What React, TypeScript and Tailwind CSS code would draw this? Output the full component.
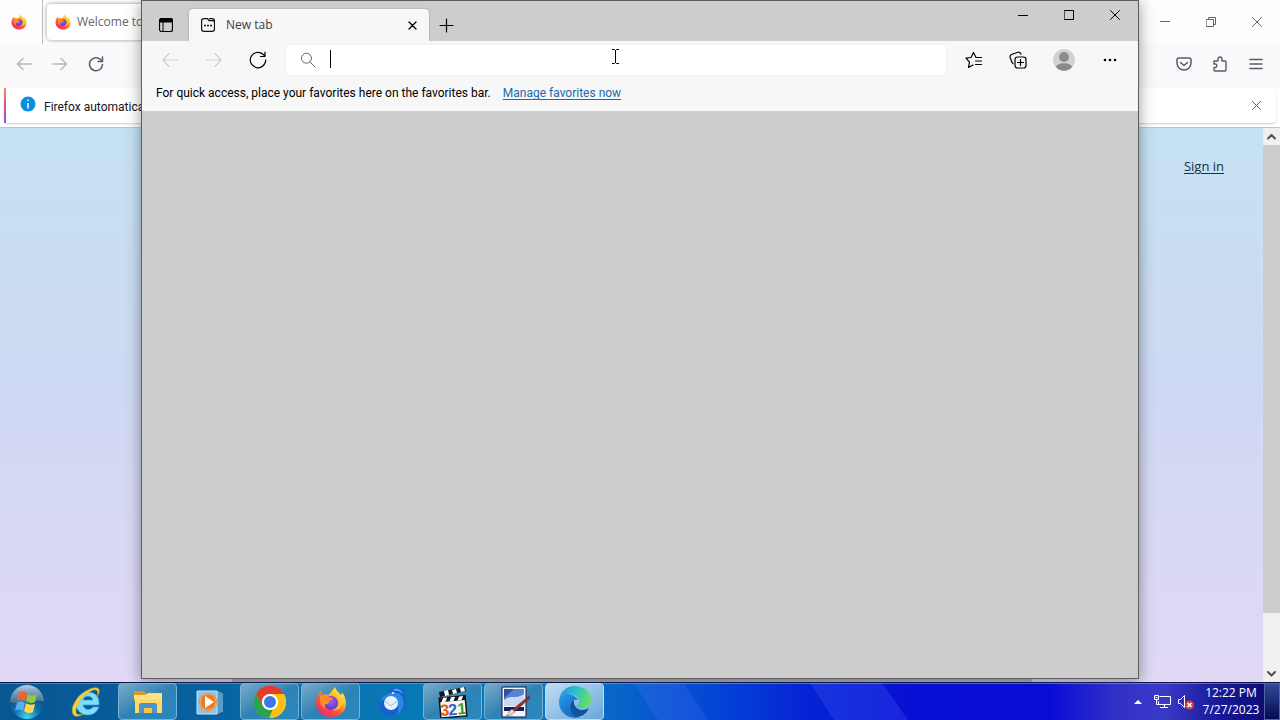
import type { ReactNode } from 'react';

interface IconButtonProps {
  label: string;
  className?: string;
  children: ReactNode;
}

function IconButton({ label, className = '', children }: IconButtonProps) {
  return (
    <button aria-label={label} className={`flex shrink-0 items-center justify-center ${className}`}>
      {children}
    </button>
  );
}

interface LineIconProps {
  d: string;
  size?: number;
  width?: number;
  className?: string;
}

function LineIcon({ d, size = 16, width = 1, className = '' }: LineIconProps) {
  return (
    <svg width={size} height={size} viewBox={`0 0 ${size} ${size}`} fill="none" stroke="currentColor" strokeWidth={width} strokeLinecap="round" strokeLinejoin="round" className={className}>
      <path d={d} />
    </svg>
  );
}

function FirefoxLogo({ size, id }: { size: number; id: string }) {
  return (
    <svg width={size} height={size} viewBox="0 0 32 32">
      <defs>
        <linearGradient id={`${id}-body`} x1="0.85" y1="0.1" x2="0.2" y2="0.95">
          <stop offset="0" stopColor="#fff44f" />
          <stop offset="0.3" stopColor="#ffb52e" />
          <stop offset="0.6" stopColor="#ff5a36" />
          <stop offset="1" stopColor="#f0246f" />
        </linearGradient>
        <radialGradient id={`${id}-globe`} cx="0.5" cy="0.4" r="0.6">
          <stop offset="0" stopColor="#a05cf5" />
          <stop offset="1" stopColor="#5b3cc4" />
        </radialGradient>
      </defs>
      <path d="M20 1c1 4 4 5 6 8 1-1 1-2 1-3 3 4 4 8 4 12 0 8-7 13-15 13S1 25 1 17C1 12 3 8 6 5c0 2 0 3 1 4 2-1 4-1 6 0 2-2 4-4 7-8z" fill={`url(#${id}-body)`} />
      <circle cx="16" cy="17" r="7" fill={`url(#${id}-globe)`} />
      <path d="M5 10c4-2 7-1 9 1l4 1c0 2-3 2-4 3s1 3-2 3-3 3 0 5c-5-1-7-5-7-9z" fill="#ff8a2a" />
      <path d="M19 3c0 5 6 7 5 14-1 4-3 6-7 7 6 1 11-3 11-9 0-5-5-7-9-12z" fill="#ffcf3a" opacity="0.75" />
    </svg>
  );
}

function WindowsOrb() {
  return (
    <svg width="36" height="36" viewBox="0 0 36 36">
      <defs>
        <radialGradient id="orb" cx="0.5" cy="0.95" r="0.8">
          <stop offset="0" stopColor="#3fd8f8" />
          <stop offset="0.45" stopColor="#0e74b3" />
          <stop offset="1" stopColor="#0d3f69" />
        </radialGradient>
        <linearGradient id="orb-shine" x1="0" y1="0" x2="0" y2="1">
          <stop offset="0" stopColor="#b5cfe0" />
          <stop offset="1" stopColor="#4f7c9f" stopOpacity="0.7" />
        </linearGradient>
      </defs>
      <circle cx="18" cy="18" r="17" fill="url(#orb)" />
      <path d="M1 18a17 17 0 0 1 34 0c-8-4-24 4-34 0z" fill="url(#orb-shine)" />
      <path d="M10 9c3-2 5-2 8 0l-2 8c-3-2-5-2-8 0z" fill="#f0642c" />
      <path d="M19 10c3 2 5 2 9 0l-2 8c-3 2-6 1-9-1z" fill="#96c83c" />
      <path d="M8 19c3-2 5-2 8 0l-2 8c-3-2-5-2-8 0z" fill="#5ab0ee" />
      <path d="M17 19c3 2 5 2 9 1l-2 8c-4 2-6 1-9-1z" fill="#ffd84a" />
    </svg>
  );
}

function ExplorerEIcon() {
  return (
    <svg width="32" height="32" viewBox="0 0 32 32">
      <path d="M28 19H12c1 5 7 6 10 2h6c-2 5-6 8-11 8C10 29 5 24 5 18S10 6 17 6s12 5 11 13zM12 14h10c-1-5-9-5-10 0z" fill="#7fdcfa" stroke="#35a7dd" strokeWidth="0.7" />
      <path d="M26 11C32 1 25-1 15 5 5 11-1 22 2 28c2 4 7 2 10 0-4 1-7 1-7-2C4 20 12 9 20 5c6-3 8 0 6 6z" fill="#f8cf38" stroke="#d5a516" strokeWidth="0.5" />
    </svg>
  );
}

function FolderIcon() {
  return (
    <svg width="32" height="32" viewBox="0 0 32 32">
      <path d="M2 5h10l2 3h15v7H2z" fill="#d99b1f" />
      <path d="M3 9h10l3-2h14v20H3z" fill="#ffd967" />
      <path d="M2 9h11l3-1h14v5H2z" fill="#ffe083" />
      <path d="M7 27v-8q0-2 2-2h14q2 0 2 2v8h-5v-5h-8v5z" fill="#4b93cd" />
      <path d="M12 22h8v5h-8z" fill="#f6c54b" />
    </svg>
  );
}

function MediaPlayerIcon() {
  return (
    <svg width="30" height="28" viewBox="0 0 30 28">
      <path d="M3 3h20v23H3z" fill="#8fc6e8" stroke="#c8e4f5" />
      <path d="M24 3v23M26 4v21M28 5v19" stroke="#a9d6ef" />
      <circle cx="14" cy="14" r="9" fill="#ea7a24" />
      <circle cx="14" cy="14" r="8" fill="none" stroke="#f9b26d" />
      <path d="M11 8l9 6-9 6z" fill="#fff" />
    </svg>
  );
}

function ChromeIcon() {
  return (
    <svg width="32" height="32" viewBox="0 0 32 32">
      <circle cx="16" cy="16" r="16" fill="#fbc116" />
      <path d="M2 8a16 16 0 0 1 28 0H16a8 8 0 0 0-7 12z" fill="#e33b2e" />
      <path d="M2 8l7 12a8 8 0 0 0 10 3l-4 9A16 16 0 0 1 2 8z" fill="#2ba24c" />
      <path d="M30 8a16 16 0 0 1-14 24l7-12a8 8 0 0 0-7-12z" fill="#fbc116" />
      <circle cx="16" cy="16" r="8" fill="#fff" />
      <circle cx="16" cy="16" r="6" fill="#3b78e7" />
    </svg>
  );
}

function ThunderbirdIcon() {
  return (
    <svg width="32" height="32" viewBox="0 0 32 32">
      <path d="M10 9C12 3 18 0 24 2c4 2 6 5 6 9 1 10-5 19-15 19C7 30 1 24 3 15c0 2 1 2 2 1 0-3 2-6 5-7z" fill="#1463cc" />
      <path d="M10 9c5-5 15-3 17 3 2 7-1 13-6 17 2-6 2-14-5-17-4-1-8 0-11 4 0-3 2-6 5-7z" fill="#2b86e4" />
      <path d="M18 3c4-1 8 1 9 5-3-3-6-4-10-3z" fill="#4ba6f5" />
      <circle cx="15" cy="17" r="7" fill="#e8f4ff" />
      <path d="M9 15l6 5 6-5" fill="none" stroke="#a9c9ea" strokeWidth="1.2" />
      <circle cx="17" cy="7" r="1" fill="#fff" />
    </svg>
  );
}

function ClapperIcon() {
  return (
    <svg width="32" height="32" viewBox="0 0 32 32">
      <g transform="rotate(-5 16 21)">
        <rect x="3" y="11" width="26" height="20" fill="#f8f8f4" stroke="#161616" strokeWidth="1.5" />
        <path d="M3 11h26v4H3z" fill="#161616" />
        <path d="M7 11h4l-2 4H5zM15 11h4l-2 4h-4zM23 11h4l-2 4h-4z" fill="#fff" />
        <g fontFamily="Liberation Sans" fontSize="16" fontWeight="700">
          <text x="3" y="29" fill="#e2571e">3</text>
          <text x="11" y="29" fill="#3860c8">2</text>
          <text x="20" y="29" fill="#3c9c32">1</text>
        </g>
      </g>
      <path d="M2 6l26-5 1 4-26 6z" fill="#161616" />
      <path d="M7 5l4-1 1 5-4 1zM15 4l4-1 1 4-4 1zM23 2l4-1 1 4-4 1z" fill="#fff" />
    </svg>
  );
}

function JournalIcon() {
  return (
    <svg width="32" height="32" viewBox="0 0 32 32">
      <path d="M4 1h24v30H4z" fill="#f4f6fb" stroke="#101735" />
      <path d="M6 3h20v16H6z" fill="#5c82cf" />
      <path d="M6 3h10L6 12z" fill="#2c4fa8" />
      <path d="M6 14c7-6 11 0 20-6v12H6z" fill="#c6d8f3" />
      <path d="M6 21h20v4H6z" fill="#10225f" />
      <path d="M31 10L14 24l2 2 16-14z" fill="#9c3036" stroke="#5c1c25" strokeWidth="0.6" />
      <path d="M14 23l3 3-4 3-5 1c3-1 2-5 6-7z" fill="#e8d9ca" stroke="#66515a" strokeWidth="0.5" />
    </svg>
  );
}

function EdgeIcon() {
  return (
    <svg width="32" height="32" viewBox="0 0 32 32">
      <defs>
        <linearGradient id="edge-top" x1="0" y1="0.3" x2="1" y2="0.5">
          <stop offset="0" stopColor="#2793dc" />
          <stop offset="0.5" stopColor="#2fc0cf" />
          <stop offset="1" stopColor="#68df5b" />
        </linearGradient>
        <linearGradient id="edge-side" x1="0" y1="0" x2="0.8" y2="1">
          <stop offset="0" stopColor="#249ce6" />
          <stop offset="1" stopColor="#1463bd" />
        </linearGradient>
      </defs>
      <path d="M0 15C1 6 7 0 16 0c10 0 16 7 16 14 0 6-5 8-9 8-3 0-6-1-5-3 1-1 2-2 2-4 0-4-5-7-10-7-5 0-9 4-10 7z" fill="url(#edge-top)" />
      <path d="M0 16c0-5 5-8 9-8s9 3 10 6c-4-1-8 2-8 6 0 5 4 10 10 11-12 3-21-5-21-15z" fill="url(#edge-side)" />
      <path d="M11 20c0-3 2-5 4-6-1 7 5 12 13 9 1-1 2 0 1 1-3 5-8 7-11 7-4-1-7-6-7-11z" fill="#14519f" />
    </svg>
  );
}

function FirefoxWindow() {
  return (
    <section aria-label="Firefox" className="flex h-full flex-col bg-white">
      <div className="flex h-11 items-center bg-[#fdfdfe]">
        <div className="flex h-11 w-[43px] shrink-0 items-center justify-center border-r border-[#bcbcc2] pr-1">
          <FirefoxLogo size={16} id="pinned" />
        </div>
        <button className="ml-1 flex h-9 w-[225px] items-center gap-1.5 rounded bg-white px-2 text-xs text-[#66666c] shadow-[0_0_4px_rgba(0,0,0,0.4)]">
          <FirefoxLogo size={16} id="welcome" />
          <span className="whitespace-nowrap">Welcome to</span>
        </button>
        <div className="ml-auto flex h-11 text-[#66666a]">
          <IconButton label="Minimize Firefox" className="w-[46px]"><LineIcon size={10} d="M0 4.5h10" /></IconButton>
          <IconButton label="Restore Firefox" className="w-[46px]"><LineIcon size={10} d="M.5 2.5h7v7h-7zM2.5 2.5v-2h7v7h-2" /></IconButton>
          <IconButton label="Close Firefox" className="w-[46px]"><LineIcon size={10} d="M.5.5l9 9M9.5.5l-9 9" /></IconButton>
        </div>
      </div>
      <div className="flex h-11 items-center bg-[#f9f9fb] px-1.5 pb-1 text-[#5b5b62]">
        <IconButton label="Firefox back" className="w-9 text-[#b5b5b9]"><LineIcon width={1.4} d="M15 8H1.5M7 2.5L1.5 8 7 13.5" /></IconButton>
        <IconButton label="Firefox forward" className="w-9 text-[#b5b5b9]"><LineIcon width={1.4} d="M1 8h13.5M9 2.5L14.5 8 9 13.5" /></IconButton>
        <IconButton label="Firefox reload" className="w-9"><LineIcon width={1.5} d="M14.5 8.5a6.5 6.5 0 1 1-2-5L14.5 5.5M14.5 1v4.5H10" /></IconButton>
        <IconButton label="Save to Pocket" className="ml-auto w-9"><LineIcon width={1.5} d="M3 2h10q2 0 2 2v3a7 7 0 0 1-14 0V4q0-2 2-2zM4.5 6.5L8 9.5l3.5-3" /></IconButton>
        <IconButton label="Extensions" className="w-9"><LineIcon width={1.4} d="M2 5h4V3a2 2 0 0 1 4 0v2h3q1 0 1 1v8q0 1-1 1H3q-1 0-1-1v-2.5h1.5a1.8 1.8 0 0 0 0-3.5H2z" /></IconButton>
        <IconButton label="Firefox menu" className="w-9"><LineIcon width={1.4} d="M2 3.5h12M2 8h12M2 12.5h12" /></IconButton>
      </div>
      <div className="mx-1 flex h-[35px] items-center rounded bg-white pr-3 text-xs text-[#15141a] shadow-[0_1px_2px_rgba(0,0,0,0.2)]">
        <div className="h-full w-0.5 bg-linear-to-b from-[#f08a55] via-[#d9509b] to-[#8855cf]" />
        <svg width="16" height="16" viewBox="0 0 16 16" className="mr-2 mb-1 ml-[14px] shrink-0">
          <circle cx="8" cy="8" r="7.5" fill="#0a8de0" />
          <path d="M8 3.5v1.5M8 7v5.5" stroke="#fff" strokeWidth="1.5" />
        </svg>
        <span className="pt-0.5 font-['Roboto','Open_Sans',sans-serif] whitespace-nowrap">Firefox automatically</span>
        <IconButton label="Dismiss notification" className="ml-auto h-6 w-4 text-[#5b5b62]"><LineIcon size={9} d="M.5.5l8 8M8.5.5l-8 8" /></IconButton>
      </div>
      <div className="mt-1 flex min-h-0 flex-1 border-t border-[#b9c8d1]">
        <main className="flex flex-1 flex-col items-end justify-between bg-linear-to-b from-[#c5e2f2] via-[#ced9f3] via-45% to-[#e1d8f5]">
          <a href="#signin" className="mt-[29px] mr-[39px] text-[13px] text-[#152f4c] underline underline-offset-2">Sign in</a>
          <div className="h-1 w-[800px] self-center bg-[#b5b3c2]" />
        </main>
        <div className="flex w-[17px] flex-col bg-[#f0f0f0] text-[#505050]">
          <IconButton label="Scroll up" className="h-[17px]"><LineIcon size={9} width={2} d="M1 6.5L4.5 3 8 6.5" /></IconButton>
          <div className="flex-9 bg-[#cdcdcd]" />
          <div className="flex-1" />
          <IconButton label="Scroll down" className="h-[17px]"><LineIcon size={9} width={2} d="M1 3l3.5 3.5L8 3" /></IconButton>
        </div>
      </div>
    </section>
  );
}

function EdgeWindow() {
  return (
    <section aria-label="Microsoft Edge" className="absolute top-0 right-[141px] bottom-[3px] left-[141px] flex flex-col border border-[#5c5c5c] bg-[#cdcdcd] text-black shadow-[0_2px_14px_rgba(0,0,0,0.4)]">
      <div className="flex h-10 items-end">
        <IconButton label="Tab actions" className="mb-0.5 h-7 w-[47px]">
          <svg width="14" height="14" viewBox="0 0 14 14" fill="none" stroke="currentColor">
            <rect x="0.5" y="0.5" width="13" height="13" rx="2" strokeWidth="1.2" />
            <path d="M1 1h12v3H1z" fill="currentColor" />
            <path d="M4 4v9" />
          </svg>
        </IconButton>
        <div className="flex h-8 w-60 items-center rounded-t bg-[#f7f7f7] px-3 text-xs shadow-[0_0_2px_rgba(0,0,0,0.3)]">
          <svg width="14" height="14" viewBox="0 0 14 14" fill="none" stroke="#111" strokeWidth="1.2">
            <path d="M3 .6h3.5l1.5 2h3.5q2 0 2 2V11q0 2.4-2.4 2.4H3Q.6 13.4.6 11V3Q.6.6 3 .6zM8 .6h3q2.4 0 2.4 2.4v2" />
            <path d="M3 7.5h2M6 7.5h2M9 7.5h2" strokeWidth="1.5" />
          </svg>
          <span className="ml-[11px] text-[#3c3c3c]">New tab</span>
          <IconButton label="Close tab" className="ml-auto h-5 w-2.5"><LineIcon size={9} width={1.3} d="M1 1l7 7M8 1L1 8" /></IconButton>
        </div>
        <IconButton label="New tab" className="mb-0.5 h-7 w-[35px]"><LineIcon size={15} width={1.2} d="M7.5 1v13M1 7.5h13" /></IconButton>
        <div className="ml-auto flex self-start">
          <IconButton label="Minimize" className="h-7 w-[46px]"><LineIcon size={10} d="M0 5.5h10" /></IconButton>
          <IconButton label="Maximize" className="h-7 w-[46px]"><LineIcon size={10} d="M.5.5h9v9h-9z" /></IconButton>
          <IconButton label="Close" className="h-7 w-[46px]"><LineIcon size={10} d="M.5.5l9 9M9.5.5l-9 9" /></IconButton>
        </div>
      </div>
      <div className="flex h-[38px] items-center bg-[#f7f7f7] px-1.5">
        <IconButton label="Back" className="h-8 w-11 text-[#cfcfcf]"><LineIcon width={1.2} d="M15.5 8H.8M7 1.5L.8 8 7 14.5" /></IconButton>
        <IconButton label="Forward" className="h-8 w-11 text-[#cfcfcf]"><LineIcon width={1.2} d="M.5 8h14.7M9 1.5L15.2 8 9 14.5" /></IconButton>
        <IconButton label="Reload" className="h-8 w-11"><LineIcon size={18} width={1.2} d="M16.7 9A7.7 7.7 0 1 1 14 3.2L16 5M16 1v4.5h-4.5" /></IconButton>
        <label className="mx-1.5 flex h-[30px] min-w-0 flex-1 items-center rounded-xs bg-white pl-[14px] shadow-[0_0_2px_rgba(0,0,0,0.08)]">
          <LineIcon d="M11.5 6.2A5 5 0 1 1 1.5 6.2a5 5 0 0 1 10 0zM10 10l5 5" className="text-[#666]" />
          <span className="mb-0.5 ml-[14px] h-[18px] w-px bg-black" />
          <input aria-label="Search or enter web address" className="min-w-0 flex-1 text-sm outline-none" />
        </label>
        <IconButton label="Favorites" className="h-8 w-11"><LineIcon size={18} width={1.2} d="M16.5 6.5H11L8.5 1.5 6 6.5l-5 .6 3.5 4L3.5 16.5 8 14M10.5 10h6M10.5 13.5h6" /></IconButton>
        <IconButton label="Collections" className="h-8 w-11">
          <svg width="18" height="18" viewBox="0 0 18 18" fill="none" stroke="currentColor" strokeWidth="1.2" strokeLinecap="round">
            <path d="M4 12.5L3 11.5 1.2 6.5Q.5 4 3 3.2L9 1.2Q11 .5 12 3.2" />
            <rect x="6" y="6" width="11" height="11" rx="2.5" />
            <path d="M11.5 8.5v6M8.5 11.5h6" />
          </svg>
        </IconButton>
        <IconButton label="Profile" className="h-8 w-12">
          <svg width="22" height="22" viewBox="0 0 22 22">
            <circle cx="11" cy="11" r="11" fill="#d3d2d0" />
            <circle cx="11" cy="8" r="5" fill="#8d8b89" />
            <path d="M3 18c1-5 15-5 16 0-4 5-12 5-16 0z" fill="#8d8b89" />
          </svg>
        </IconButton>
        <IconButton label="Settings and more" className="h-8 w-11">
          <svg width="14" height="4" viewBox="0 0 14 4"><circle cx="2" cy="2" r="1.3" /><circle cx="7" cy="2" r="1.3" /><circle cx="12" cy="2" r="1.3" /></svg>
        </IconButton>
      </div>
      <div className="flex h-8 items-center gap-3 bg-[#f7f7f7] px-[14px] pb-1 font-['Roboto','Open_Sans',sans-serif] text-xs">
        <span>For quick access, place your favorites here on the favorites bar.</span>
        <a href="#favorites" className="text-[#2269ad] underline underline-offset-2">Manage favorites now</a>
      </div>
      <svg width="9" height="17" viewBox="0 0 9 17" className="absolute top-[47px] left-[469px]" fill="none" stroke="#000">
        <path d="M1 1.5h2.5l1 1 1-1H8M1 15.5h2.5l1-1 1 1H8M4.5 2v13" />
      </svg>
    </section>
  );
}

const TASKS = [
  { name: 'Internet Explorer', icon: <ExplorerEIcon />, open: false },
  { name: 'File Explorer', icon: <FolderIcon />, open: true },
  { name: 'Media Player', icon: <MediaPlayerIcon />, open: false },
  { name: 'Chrome', icon: <ChromeIcon />, open: true },
  { name: 'Firefox', icon: <FirefoxLogo size={32} id="task" />, open: true },
  { name: 'Thunderbird', icon: <ThunderbirdIcon />, open: false },
  { name: 'Media Player Classic', icon: <ClapperIcon />, open: true },
  { name: 'Journal', icon: <JournalIcon />, open: true },
  { name: 'Edge', icon: <EdgeIcon />, open: true, active: true },
];

function taskStyle(open: boolean, active?: boolean) {
  if (active) return 'border-[#b9dcf4] bg-linear-to-br from-[#c1dcf2] to-[#66a8d9]';
  if (open) return 'border-[#76b4d5] bg-linear-to-br from-[#78abc8] via-[#2f83b4] to-[#2987bd]';
  return 'border-transparent';
}

function Taskbar() {
  return (
    <footer className="relative flex h-[38px] shrink-0 items-center border-t border-[#07194c] text-white">
      <svg className="absolute inset-0 h-full w-full" viewBox="0 0 1280 37" preserveAspectRatio="none">
        <defs>
          <linearGradient id="bar-glow">
            <stop offset="0" stopColor="#075791" />
            <stop offset="0.15" stopColor="#07609f" />
            <stop offset="0.3" stopColor="#0878b4" />
            <stop offset="0.42" stopColor="#0878bc" />
            <stop offset="0.48" stopColor="#0866c8" />
            <stop offset="0.56" stopColor="#0444d6" />
            <stop offset="0.63" stopColor="#0524d4" />
            <stop offset="0.71" stopColor="#070fd4" />
            <stop offset="0.82" stopColor="#0a0bd5" />
            <stop offset="0.87" stopColor="#3030c9" />
            <stop offset="0.91" stopColor="#3a3ac8" />
            <stop offset="0.95" stopColor="#1a1a9a" />
            <stop offset="1" stopColor="#08086c" />
          </linearGradient>
        </defs>
        <path d="M0 0h1280v37H0z" fill="url(#bar-glow)" />
        <path d="M634 0h50l24 37h-50zM810 0h72l26 37h-74z" fill="#5a70ff" opacity="0.22" />
        <path d="M0 .5h1280" stroke="#8eb8e8" opacity="0.5" />
      </svg>
      <nav aria-label="Taskbar" className="relative flex h-full items-center gap-0.5">
        <IconButton label="Start" className="h-full w-[55px] pr-0.5"><WindowsOrb /></IconButton>
        {TASKS.map((task) => (
          <button
            key={task.name}
            aria-label={task.name}
            className={`flex h-[37px] w-[59px] items-center justify-center rounded-sm border ${taskStyle(task.open, task.active)}`}
          >
            {task.icon}
          </button>
        ))}
      </nav>
      <div className="relative ml-auto flex h-full items-center">
        <IconButton label="Show hidden icons" className="h-full w-6">
          <svg width="8" height="4" viewBox="0 0 8 4" fill="#fff"><path d="M0 4l4-4 4 4z" /></svg>
        </IconButton>
        <IconButton label="Network" className="h-full w-6">
          <svg width="17" height="15" viewBox="0 0 17 15" fill="none" stroke="#fff">
            <path d="M5.5 2.5h11v8h-12V7M10.5 10.5v3M6 13.5h8M.5 1.5h4v4h-4zM2.5 5.5v5H5M1.5 3.5h2" />
          </svg>
        </IconButton>
        <IconButton label="Volume muted" className="h-full w-6">
          <svg width="18" height="16" viewBox="0 0 18 16" fill="none" stroke="#fff">
            <path d="M1.5 5.5h2l4-4v12l-4-4h-2z" />
            <circle cx="12.5" cy="11" r="4.5" fill="#d83c3c" stroke="none" />
            <path d="M10.5 9l4 4M14.5 9l-4 4" strokeWidth="1.5" />
          </svg>
        </IconButton>
        <button className="w-[66px] pb-0.5 text-center text-xs leading-[17px] whitespace-nowrap">
          <time className="block">12:22 PM</time>
          <time className="block">7/27/2023</time>
        </button>
        <button aria-label="Show desktop" className="h-full w-4 border border-[#5660a2] bg-linear-to-b from-[#34489b] to-[#050b55]" />
      </div>
    </footer>
  );
}

export default function App() {
  return (
    <div className="flex h-screen flex-col overflow-hidden font-['Open_Sans','Noto_Sans',sans-serif]">
      <div className="relative min-h-0 flex-1">
        <FirefoxWindow />
        <EdgeWindow />
      </div>
      <Taskbar />
    </div>
  );
}
